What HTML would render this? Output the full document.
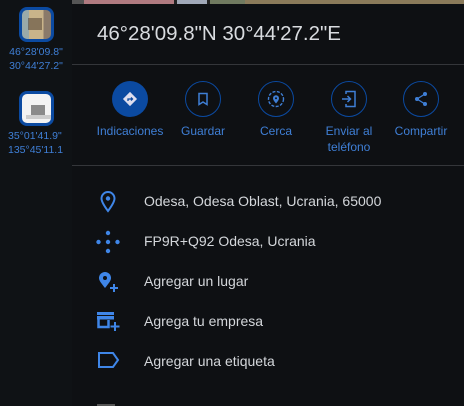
<!DOCTYPE html>
<html><head><meta charset="utf-8"><style>
*{margin:0;padding:0;box-sizing:border-box}
body{width:464px;height:406px;overflow:hidden;background:#0e1013;font-family:"Liberation Sans",Arial,sans-serif;position:relative}
.side{position:absolute;left:0;top:0;width:72px;height:406px;background:#0f1215}
.thumb{position:absolute;left:19px;width:35px;height:35px;border:3px solid #0b4aa1;border-radius:8px;overflow:hidden}
.st{position:absolute;left:0;width:72px;text-align:center;color:#3f7fd6;font-size:10.5px;line-height:14px}
.strip{position:absolute;left:72px;top:0;width:392px;height:4px;display:flex}
.title{position:absolute;left:97px;top:22px;color:#d9dce0;font-size:20.5px;letter-spacing:0}
.hr{position:absolute;left:72px;width:392px;height:1px;background:#34363a}
.act{position:absolute;top:81px;width:72px;text-align:center;color:#3f7fd6;font-size:12px;line-height:16px}
.circ{width:36px;height:36px;border-radius:50%;border:1px solid #0b4aa1;margin:0 auto 6px;display:flex;align-items:center;justify-content:center}
.row{position:absolute;left:144px;color:#d4d7db;font-size:14px}
.ic{position:absolute;left:96px}
</style></head><body>
<div class="side">
 <div class="thumb" style="top:7px;background:linear-gradient(90deg,#9aa 0 25%,#c9b48a 25% 75%,#8a7a6a 75%)"><div style="position:absolute;left:6px;top:8px;width:14px;height:12px;background:#5a4a3a;opacity:.6"></div></div>
 <div class="st" style="top:45px">46°28'09.8"<br>30°44'27.2"</div>
 <div class="thumb" style="top:91px;background:#f3f3f3"><div style="position:absolute;left:9px;top:11px;width:14px;height:10px;background:#8a8a8a"></div><div style="position:absolute;left:4px;top:21px;width:26px;height:4px;background:#ccc"></div></div>
 <div class="st" style="top:129px;text-align:left;left:8px">35°01'41.9"<br>135°45'11.1</div>
</div>
<div class="strip"><div style="width:12px;background:#555"></div><div style="width:90px;background:#b07a80"></div><div style="width:3px;background:#222"></div><div style="width:30px;background:#a0a8b8"></div><div style="width:3px;background:#222"></div><div style="width:35px;background:#707a60"></div><div style="flex:1;background:#8a7a5a"></div></div>
<div class="title">46°28'09.8"N 30°44'27.2"E</div>
<div class="hr" style="top:64px"></div>
<div class="act" style="left:94px"><div class="circ" style="background:#0b4aa1;border:none"><svg width="16" height="16" viewBox="0 0 16 16"><rect x="3" y="3" width="10" height="10" transform="rotate(45 8 8)" fill="#dde"/><path d="M6 10V8h4M9 6.5l1.5 1.5L9 9.5" stroke="#0b4aa1" stroke-width="1.3" fill="none"/></svg></div>Indicaciones</div>
<div class="act" style="left:167px"><div class="circ"><svg width="14" height="14" viewBox="0 0 14 14"><path d="M3 1.5h8v11l-4-2.5-4 2.5z" stroke="#3f7fd6" stroke-width="1.5" fill="none"/></svg></div>Guardar</div>
<div class="act" style="left:240px"><div class="circ"><svg width="18" height="18" viewBox="0 0 18 18"><circle cx="9" cy="9" r="7.5" stroke="#3f7fd6" stroke-width="1.4" fill="none" stroke-dasharray="3 1.5"/><path d="M9 13.5c-2-2.5-3-4-3-5.3a3 3 0 016 0c0 1.3-1 2.8-3 5.3z" fill="#3f7fd6"/><circle cx="9" cy="8.2" r="1" fill="#0e1013"/></svg></div>Cerca</div>
<div class="act" style="left:313px"><div class="circ"><svg width="16" height="18" viewBox="0 0 16 18"><path d="M5 4V1.5h9v15H5V14" stroke="#3f7fd6" stroke-width="1.5" fill="none"/><path d="M1 9h8M6.5 6l3 3-3 3" stroke="#3f7fd6" stroke-width="1.5" fill="none"/></svg></div>Enviar al<br>teléfono</div>
<div class="act" style="left:385px"><div class="circ"><svg width="16" height="16" viewBox="0 0 16 16"><circle cx="12" cy="3" r="2" fill="#3f7fd6"/><circle cx="4" cy="8" r="2" fill="#3f7fd6"/><circle cx="12" cy="13" r="2" fill="#3f7fd6"/><path d="M12 3L4 8l8 5" stroke="#3f7fd6" stroke-width="1.3" fill="none"/></svg></div>Compartir</div>
<div class="hr" style="top:165px"></div>

<svg class="ic" style="top:191px;left:100px" width="16" height="22" viewBox="0 0 16 22"><path d="M8 20C3.5 14 1.5 10.5 1.5 7.5a6.5 6.5 0 0113 0C14.5 10.5 12.5 14 8 20z" stroke="#3f86e8" stroke-width="2" fill="none"/><circle cx="8" cy="7.5" r="2.2" fill="#3f86e8"/></svg>
<div class="row" style="top:193px">Odesa, Odesa Oblast, Ucrania, 65000</div>
<svg class="ic" style="top:230px;left:95px" width="26" height="24" viewBox="0 0 26 24"><g fill="#3f86e8"><circle cx="13" cy="3" r="2.2"/><circle cx="3.5" cy="12" r="2.2"/><circle cx="13" cy="12" r="2.2"/><circle cx="22.5" cy="12" r="2.2"/><circle cx="13" cy="21" r="2.2"/></g></svg>
<div class="row" style="top:233px">FP9R+Q92 Odesa, Ucrania</div>
<svg class="ic" style="top:271px;left:98px" width="22" height="22" viewBox="0 0 22 22"><path d="M7 17C3 12 1 9.5 1 7a6 6 0 0112 0c0 2.5-2 5-6 10z" fill="#3f86e8"/><circle cx="7" cy="7" r="2" fill="#0e1013"/><path d="M16 13v8M12 17h8" stroke="#3f86e8" stroke-width="2"/></svg>
<div class="row" style="top:273px">Agregar un lugar</div>
<svg class="ic" style="top:312px;left:97px" width="24" height="20" viewBox="0 0 24 20"><rect x="0" y="0" width="17" height="3" fill="#3f86e8"/><rect x="0" y="4" width="17" height="3.5" fill="#3f86e8"/><path d="M1.5 7v8h10V8" stroke="#3f86e8" stroke-width="2.5" fill="none"/><path d="M18 10v9M13.5 14.5h9" stroke="#3f86e8" stroke-width="2"/></svg>
<div class="row" style="top:313px">Agrega tu empresa</div>
<svg class="ic" style="top:352px;left:98px" width="22" height="16" viewBox="0 0 22 16"><path d="M1 1h14l5 7-5 7H1z" stroke="#3f86e8" stroke-width="2" fill="none"/></svg>
<div class="row" style="top:353px">Agregar una etiqueta</div>
<div style="position:absolute;left:97px;top:404px;width:18px;height:2px;background:#555"></div>
</body></html>
